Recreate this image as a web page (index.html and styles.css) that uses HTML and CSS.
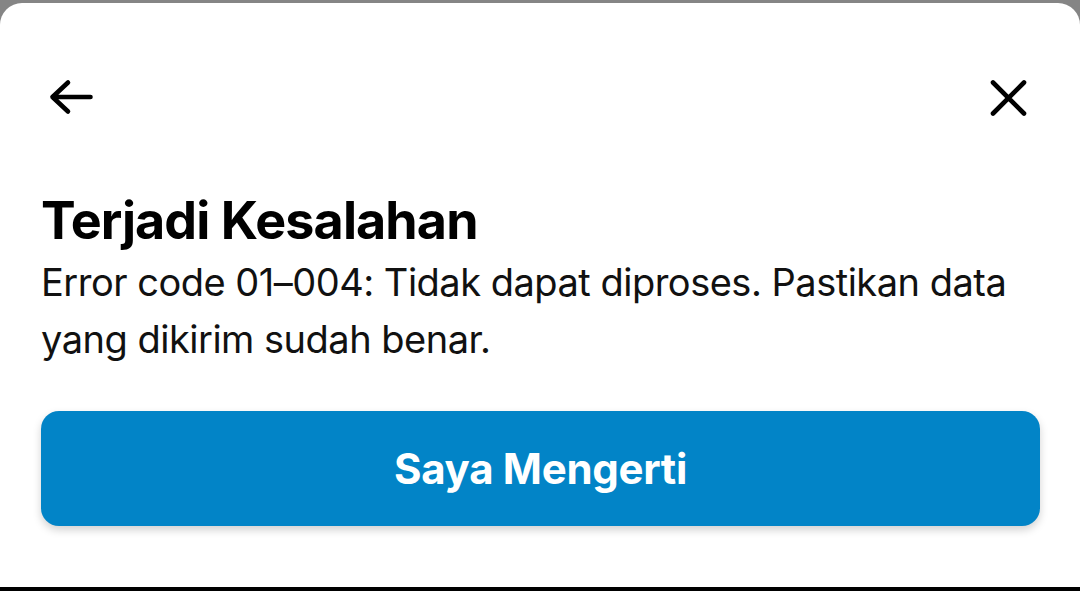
FILE: index.html
```html
<!DOCTYPE html>
<html lang="id">
<head>
<meta charset="utf-8">
<title>Terjadi Kesalahan</title>
<link rel="stylesheet" href="styles.css">
</head>
<body>
<div class="screen">
  <div class="sheet">
    <div class="header">
      <button class="icon-btn" aria-label="Kembali">
        <svg width="48" height="48" viewBox="0 0 48 48" fill="none" stroke="#000" stroke-width="4.6" stroke-linecap="round" stroke-linejoin="round">
          <path d="M42.5 24H4.5M20 9.5L4.5 24L20 38.5"/>
        </svg>
      </button>
      <button class="icon-btn" aria-label="Tutup">
        <svg width="48" height="48" viewBox="0 0 48 48" fill="none" stroke="#000" stroke-width="4.6" stroke-linecap="round">
          <path d="M9 9.5L40 40.5M40 9.5L9 40.5"/>
        </svg>
      </button>
    </div>
    <h1 class="title">Terjadi Kesalahan</h1>
    <p class="message">Error code 01–004: Tidak dapat diproses. Pastikan data yang dikirim sudah benar.</p>
    <button class="primary-btn">Saya Mengerti</button>
  </div>
  <div class="nav-strip"></div>
</div>
</body>
</html>
```
FILE: styles.css
```css
* { box-sizing: border-box; }
html, body {
  margin: 0;
  padding: 0;
  width: 1080px;
  height: 591px;
  overflow: hidden;
}
body {
  background: #858585;
  font-family: "Inter", "Noto Sans", sans-serif;
  color: #000;
}
.screen {
  display: flex;
  flex-direction: column;
  height: 591px;
  padding-top: 3px;
}
.sheet {
  flex: 1;
  background: #fff;
  border-radius: 22px 22px 0 0;
  padding: 0 40px 0 41px;
  display: flex;
  flex-direction: column;
}
.header {
  margin-top: 70px;
  height: 48px;
  display: flex;
  justify-content: space-between;
  padding: 0 8px 0 7px;
}
.icon-btn {
  width: 48px;
  height: 48px;
  padding: 0;
  border: 0;
  background: transparent;
  display: block;
}
.icon-btn svg { display: block; }
.title {
  margin: 68px 0 0 0;
  font-size: 52px;
  line-height: 64px;
  font-weight: 700;
  letter-spacing: -0.9px;
}
.message {
  margin: 1px 0 0 0;
  font-size: 38px;
  line-height: 57px;
  font-weight: 400;
  letter-spacing: -0.5px;
  color: #111;
}
.primary-btn {
  margin-top: 43px;
  height: 115px;
  width: 100%;
  border: 0;
  border-radius: 18px;
  background: #0284c7;
  color: #fff;
  font-family: "Inter", "Noto Sans", sans-serif;
  font-size: 42px;
  font-weight: 700;
  letter-spacing: -0.3px;
  box-shadow: 0 4px 8px rgba(0, 0, 0, 0.18);
}
.nav-strip {
  height: 4px;
  background: #000;
}
```
